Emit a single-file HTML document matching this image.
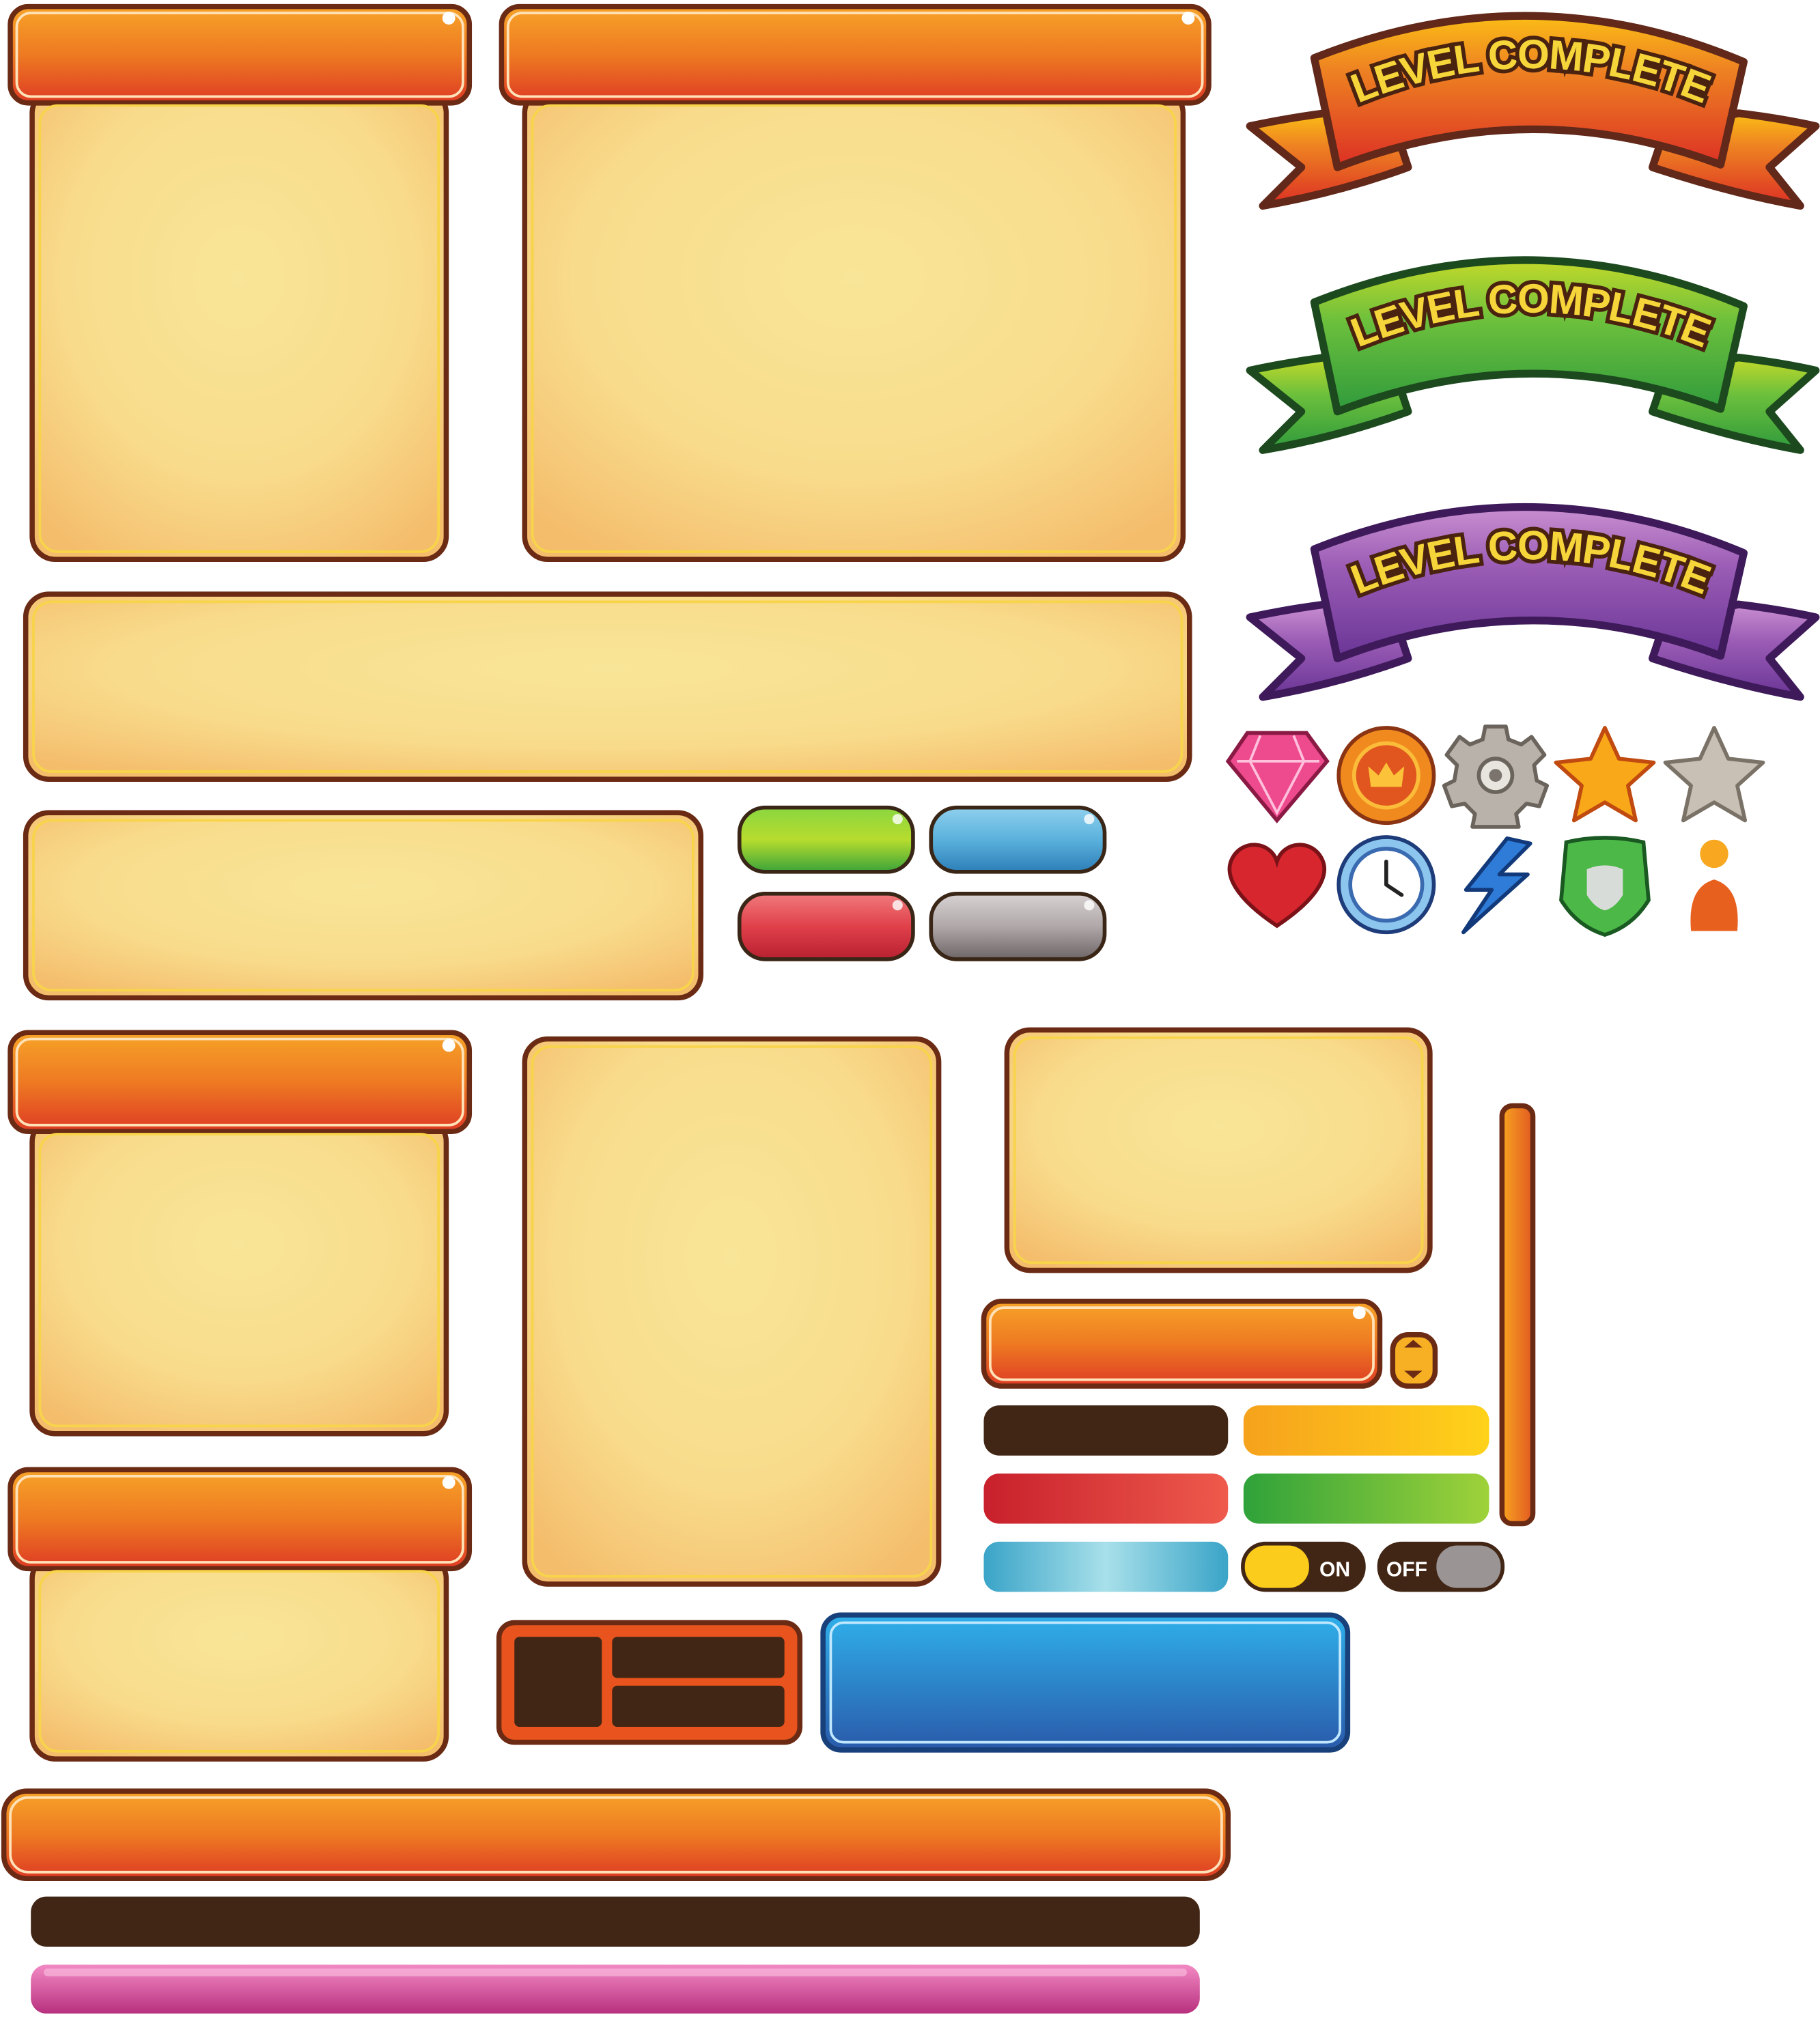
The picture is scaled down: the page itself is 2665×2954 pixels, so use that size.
<!DOCTYPE html>
<html><head><meta charset="utf-8"><style>html,body{margin:0;padding:0;background:#fff}svg{display:block}</style></head>
<body>
<svg width="2665" height="2954" viewBox="0 0 1415.3 1568.6" xmlns="http://www.w3.org/2000/svg">
<defs>
<radialGradient id="cream" cx="50%" cy="40%" r="70%"><stop offset="0" stop-color="#f9e597"/><stop offset="0.6" stop-color="#f8dc8c"/><stop offset="1" stop-color="#f4bd6c"/></radialGradient>
<linearGradient id="hdr" x1="0" y1="0" x2="0" y2="1"><stop offset="0" stop-color="#f7a328"/><stop offset="0.5" stop-color="#ee7a22"/><stop offset="1" stop-color="#de3b24"/></linearGradient>
<linearGradient id="gO" x1="0" y1="0" x2="0" y2="1"><stop offset="0" stop-color="#fbbd16"/><stop offset="0.35" stop-color="#ee8322"/><stop offset="1" stop-color="#dc2f24"/></linearGradient>
<linearGradient id="gG" x1="0" y1="0" x2="0" y2="1"><stop offset="0" stop-color="#c3d92a"/><stop offset="0.4" stop-color="#6cc03c"/><stop offset="1" stop-color="#2f9a3c"/></linearGradient>
<linearGradient id="gP" x1="0" y1="0" x2="0" y2="1"><stop offset="0" stop-color="#c98fd0"/><stop offset="0.4" stop-color="#9a5cb5"/><stop offset="1" stop-color="#6a3596"/></linearGradient>
<linearGradient id="bG" x1="0" y1="0" x2="0" y2="1"><stop offset="0" stop-color="#8ad641"/><stop offset="0.5" stop-color="#b7dc2d"/><stop offset="1" stop-color="#3aa43a"/></linearGradient>
<linearGradient id="bB" x1="0" y1="0" x2="0" y2="1"><stop offset="0" stop-color="#8fd0ef"/><stop offset="0.5" stop-color="#5ab1dc"/><stop offset="1" stop-color="#2d7fb8"/></linearGradient>
<linearGradient id="bR" x1="0" y1="0" x2="0" y2="1"><stop offset="0" stop-color="#f07a7c"/><stop offset="0.5" stop-color="#e0404a"/><stop offset="1" stop-color="#b82030"/></linearGradient>
<linearGradient id="bS" x1="0" y1="0" x2="0" y2="1"><stop offset="0" stop-color="#d8d2d2"/><stop offset="0.5" stop-color="#b0a8a8"/><stop offset="1" stop-color="#6e6666"/></linearGradient>
<linearGradient id="bY" x1="0" y1="0" x2="1" y2="0"><stop offset="0" stop-color="#f6a21c"/><stop offset="1" stop-color="#ffd21a"/></linearGradient>
<linearGradient id="bGr" x1="0" y1="0" x2="1" y2="0"><stop offset="0" stop-color="#2fa23a"/><stop offset="1" stop-color="#9fd23a"/></linearGradient>
<linearGradient id="bRe" x1="0" y1="0" x2="1" y2="0"><stop offset="0" stop-color="#c8202c"/><stop offset="1" stop-color="#ee5a4c"/></linearGradient>
<linearGradient id="bC" x1="0" y1="0" x2="1" y2="0"><stop offset="0" stop-color="#3aa4c8"/><stop offset="0.5" stop-color="#a8e0ea"/><stop offset="1" stop-color="#3aa4c8"/></linearGradient>
<linearGradient id="blue" x1="0" y1="0" x2="0" y2="1"><stop offset="0" stop-color="#2fb0ea"/><stop offset="1" stop-color="#2a5aaa"/></linearGradient>
<linearGradient id="pink" x1="0" y1="0" x2="0" y2="1"><stop offset="0" stop-color="#f28ac4"/><stop offset="1" stop-color="#b8307e"/></linearGradient>
<linearGradient id="vert" x1="0" y1="0" x2="1" y2="0"><stop offset="0" stop-color="#f7a320"/><stop offset="1" stop-color="#e25a22"/></linearGradient>
<path id="tp1" d="M1030,92 Q1190,14 1350,92"/>
<path id="tp2" d="M1030,282 Q1190,204 1350,282"/>
<path id="tp3" d="M1030,474 Q1190,396 1350,474"/>
</defs>

<g stroke="#6b2a14" stroke-width="4">
<rect x="25" y="70" width="322" height="365" rx="18" fill="url(#cream)"/>
<rect x="8" y="5" width="357" height="75" rx="14" fill="url(#hdr)"/>
<rect x="408" y="70" width="512" height="365" rx="18" fill="url(#cream)"/>
<rect x="390" y="5" width="550" height="75" rx="14" fill="url(#hdr)"/>
<rect x="20" y="462" width="905" height="144" rx="18" fill="url(#cream)"/>
<rect x="20" y="632" width="525" height="144" rx="18" fill="url(#cream)"/>
<rect x="25" y="870" width="322" height="245" rx="18" fill="url(#cream)"/>
<rect x="8" y="803" width="357" height="77" rx="14" fill="url(#hdr)"/>
<rect x="25" y="1210" width="322" height="158" rx="18" fill="url(#cream)"/>
<rect x="8" y="1143" width="357" height="77" rx="14" fill="url(#hdr)"/>
<rect x="408" y="808" width="322" height="424" rx="18" fill="url(#cream)"/>
<rect x="783" y="801" width="329" height="187" rx="18" fill="url(#cream)"/>
<rect x="765" y="1012" width="308" height="66" rx="14" fill="url(#hdr)"/>
<rect x="1083" y="1038" width="33" height="40" rx="12" fill="#f7b024"/>
<rect x="1168" y="860" width="24" height="325" rx="8" fill="url(#vert)"/>
<rect x="3" y="1393" width="952" height="68" rx="18" fill="url(#hdr)"/>
<rect x="388" y="1262" width="234" height="93" rx="12" fill="#e9541e"/>
</g>
<g fill="none" stroke="#f8d44a" stroke-width="2">
<rect x="31" y="82" width="310" height="347" rx="14"/>
<rect x="414" y="82" width="500" height="347" rx="14"/>
<rect x="26" y="468" width="893" height="132" rx="14"/>
<rect x="26" y="638" width="513" height="132" rx="14"/>
<rect x="31" y="882" width="310" height="227" rx="14"/>
<rect x="31" y="1222" width="310" height="140" rx="14"/>
<rect x="414" y="814" width="310" height="412" rx="14"/>
<rect x="789" y="807" width="317" height="175" rx="14"/>
</g>
<g fill="none" stroke="#ffe2b8" stroke-width="2">
<rect x="13" y="10" width="347" height="65" rx="11"/>
<rect x="395" y="10" width="540" height="65" rx="11"/>
<rect x="13" y="808" width="347" height="67" rx="11"/>
<rect x="13" y="1148" width="347" height="67" rx="11"/>
<rect x="770" y="1017" width="298" height="56" rx="11"/>
<rect x="8" y="1398" width="942" height="58" rx="14"/>
</g>
<g fill="#fff"><circle cx="349" cy="14" r="5"/><circle cx="924" cy="14" r="5"/><circle cx="349" cy="813" r="5"/><circle cx="349" cy="1153" r="5"/><circle cx="1057" cy="1021" r="5"/></g>
<path d="M1092,1048 h14 l-7,-6z M1092,1066 h14 l-7,6z" fill="#6b2a14"/>

<rect x="400" y="1273" width="68" height="70" rx="4" fill="#422615"/>
<rect x="476" y="1273" width="134" height="32" rx="4" fill="#422615"/>
<rect x="476" y="1311" width="134" height="32" rx="4" fill="#422615"/>
<rect x="640" y="1256" width="408" height="105" rx="14" fill="url(#blue)" stroke="#18407a" stroke-width="4"/>
<rect x="646" y="1262" width="396" height="93" rx="10" fill="none" stroke="#bfe8ff" stroke-width="2"/>
<rect x="24" y="1475" width="909" height="39" rx="12" fill="#422615"/>
<rect x="24" y="1528" width="909" height="38" rx="12" fill="url(#pink)"/>
<rect x="34" y="1531" width="889" height="6" rx="3" fill="#f8b8dc" opacity="0.7"/>
<rect x="765" y="1093" width="190" height="39" rx="12" fill="#422615"/>
<rect x="967" y="1093" width="191" height="39" rx="12" fill="url(#bY)"/>
<rect x="765" y="1146" width="190" height="39" rx="12" fill="url(#bRe)"/>
<rect x="967" y="1146" width="191" height="39" rx="12" fill="url(#bGr)"/>
<rect x="765" y="1199" width="190" height="39" rx="12" fill="url(#bC)"/>
<rect x="965" y="1199" width="97" height="39" rx="19" fill="#422615"/>
<rect x="968" y="1202" width="50" height="33" rx="16" fill="#fbcc1c"/>
<text x="1038" y="1226" font-family="Liberation Sans, sans-serif" font-size="16" font-weight="bold" fill="#fff" text-anchor="middle">ON</text>
<rect x="1071" y="1199" width="99" height="39" rx="19" fill="#422615"/>
<rect x="1117" y="1202" width="50" height="33" rx="16" fill="#9a9494"/>
<text x="1094" y="1226" font-family="Liberation Sans, sans-serif" font-size="16" font-weight="bold" fill="#fff" text-anchor="middle">OFF</text>

<g stroke="#3a2616" stroke-width="3">
<rect x="575" y="628" width="135" height="50" rx="20" fill="url(#bG)"/>
<rect x="724" y="628" width="135" height="50" rx="20" fill="url(#bB)"/>
<rect x="575" y="695" width="135" height="51" rx="20" fill="url(#bR)"/>
<rect x="724" y="695" width="135" height="51" rx="20" fill="url(#bS)"/>
</g>
<g fill="#fff" opacity="0.8"><circle cx="698" cy="637" r="4"/><circle cx="847" cy="637" r="4"/><circle cx="698" cy="704" r="4"/><circle cx="847" cy="704" r="4"/></g>

<g stroke-width="6" stroke-linejoin="round" stroke="#62281a">
<path d="M1030,88 Q1000,92 972,98 L1012,130 L982,160 Q1040,150 1095,130 L1085,100 Z" fill="url(#gO)"/>
<path d="M1352,88 Q1385,92 1412,98 L1376,130 L1400,160 Q1345,150 1285,130 L1295,100 Z" fill="url(#gO)"/>
<path d="M1022,45 Q1190,-22 1356,48 L1338,128 Q1190,72 1040,130 Z" fill="url(#gO)"/>
</g>
<g stroke-width="6" stroke-linejoin="round" stroke="#1c4a1e" transform="translate(0,190)">
<path d="M1030,88 Q1000,92 972,98 L1012,130 L982,160 Q1040,150 1095,130 L1085,100 Z" fill="url(#gG)"/>
<path d="M1352,88 Q1385,92 1412,98 L1376,130 L1400,160 Q1345,150 1285,130 L1295,100 Z" fill="url(#gG)"/>
<path d="M1022,45 Q1190,-22 1356,48 L1338,128 Q1190,72 1040,130 Z" fill="url(#gG)"/>
</g>
<g stroke-width="6" stroke-linejoin="round" stroke="#3e1a5a" transform="translate(0,382)">
<path d="M1030,88 Q1000,92 972,98 L1012,130 L982,160 Q1040,150 1095,130 L1085,100 Z" fill="url(#gP)"/>
<path d="M1352,88 Q1385,92 1412,98 L1376,130 L1400,160 Q1345,150 1285,130 L1295,100 Z" fill="url(#gP)"/>
<path d="M1022,45 Q1190,-22 1356,48 L1338,128 Q1190,72 1040,130 Z" fill="url(#gP)"/>
</g>
<g font-family="Liberation Sans, sans-serif" font-weight="bold" font-size="32" letter-spacing="-1" fill="#f6d53a" stroke="#4a2210" stroke-width="6" paint-order="stroke" text-anchor="middle">
<text><textPath href="#tp1" startOffset="50%">LEVEL COMPLETE</textPath></text>
<text><textPath href="#tp2" startOffset="50%">LEVEL COMPLETE</textPath></text>
<text><textPath href="#tp3" startOffset="50%">LEVEL COMPLETE</textPath></text>
</g>

<path d="M970,570 L1016,570 L1032,592 L993,638 L955,592 Z" fill="#ee4a8e" stroke="#8a1a44" stroke-width="3"/>
<path d="M962,592 H1026 M980,572 L972,592 L993,632 L1014,592 L1006,572" fill="none" stroke="#ffc0dc" stroke-width="2"/>
<circle cx="1078" cy="603" r="37" fill="#f08a1e" stroke="#8a3414" stroke-width="3"/>
<circle cx="1078" cy="603" r="25" fill="#e0561e" stroke="#fbbc3a" stroke-width="3"/>
<path d="M1066,612 L1064,596 L1072,603 L1078,593 L1084,603 L1092,596 L1090,612 Z" fill="#fbc23a"/>
<g transform="translate(1163,603)">
<path d="M-8,-38 H8 L10,-28 L20,-24 L28,-30 L38,-16 L30,-8 L32,4 L40,8 L34,24 L24,22 L16,30 L18,40 H-18 L-16,30 L-24,22 L-34,24 L-40,8 L-32,4 L-30,-8 L-38,-16 L-28,-30 L-20,-24 L-10,-28 Z" fill="#b8b2aa" stroke="#6a645c" stroke-width="3" stroke-linejoin="round"/>
<circle r="13" fill="#e8e4de" stroke="#6a645c" stroke-width="3"/><circle r="5" fill="#7a746c"/>
</g>
<path d="M1248,566 L1259,590 L1286,593 L1266,611 L1272,638 L1248,624 L1224,638 L1230,611 L1210,593 L1237,590 Z" fill="#f8a818" stroke="#c04a10" stroke-width="3" stroke-linejoin="round"/>
<path d="M1333,566 L1344,590 L1371,593 L1351,611 L1357,638 L1333,624 L1309,638 L1315,611 L1295,593 L1322,590 Z" fill="#c8c0b4" stroke="#7a7266" stroke-width="3" stroke-linejoin="round"/>
<path d="M993,720 C960,698 952,680 958,668 C966,652 988,654 993,670 C998,654 1020,652 1028,668 C1034,680 1026,698 993,720 Z" fill="#d8262e" stroke="#7a1218" stroke-width="3"/>
<circle cx="1078" cy="688" r="37" fill="#8cc6ee" stroke="#1e3c7a" stroke-width="3"/>
<circle cx="1078" cy="688" r="28" fill="#fff" stroke="#3a6ab0" stroke-width="3"/>
<path d="M1078,688 L1078,670 M1078,688 L1090,696" stroke="#222" stroke-width="3" stroke-linecap="round"/>
<path d="M1172,652 L1140,692 L1160,692 L1138,725 L1188,680 L1166,680 L1190,656 Z" fill="#2e7cd8" stroke="#123a7a" stroke-width="3" stroke-linejoin="round"/>
<path d="M1218,655 Q1248,648 1278,655 L1282,700 Q1270,720 1248,727 Q1226,720 1214,700 Z" fill="#4cb848" stroke="#1a5a22" stroke-width="3"/>
<path d="M1234,676 Q1248,670 1262,676 L1262,696 Q1256,706 1248,708 Q1240,706 1234,696 Z" fill="#d8dcd8"/>
<circle cx="1333" cy="664" r="11" fill="#f7a820"/>
<path d="M1315,724 Q1312,690 1333,684 Q1354,690 1351,724 Z" fill="#e8601e"/>
</svg>
</body></html>
